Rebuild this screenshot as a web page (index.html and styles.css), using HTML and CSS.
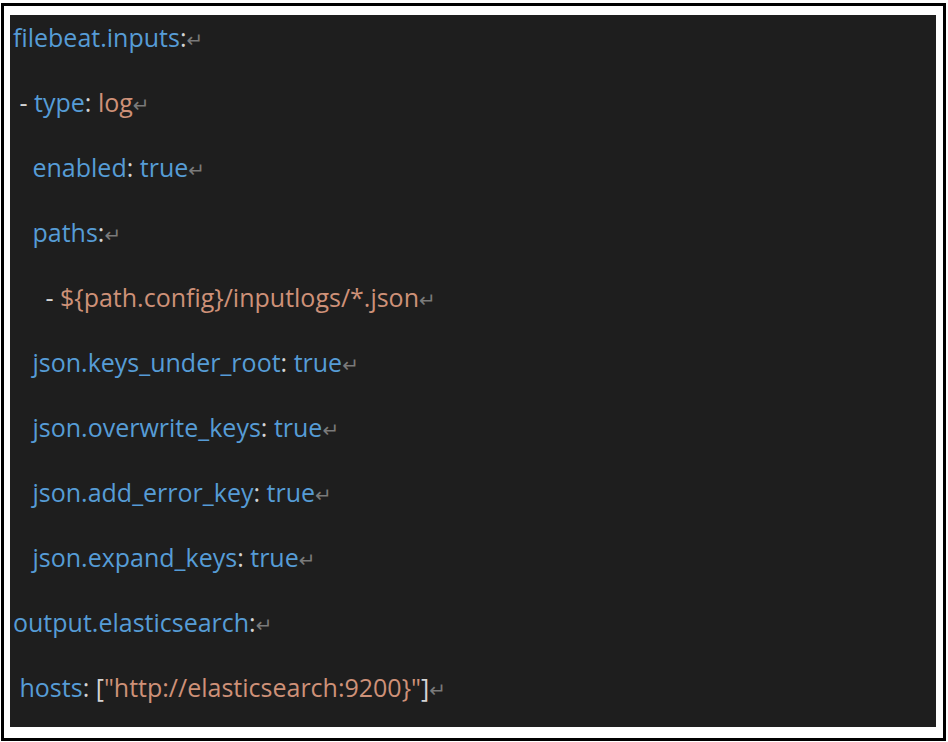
FILE: index.html
```html
<!DOCTYPE html>
<html>
<head>
<meta charset="utf-8">
<link rel="stylesheet" href="styles.css">
</head>
<body>
<div class="frame">
  <div class="code">
    <p class="ln"><span class="k">filebeat.inputs</span><span class="p">:</span><span class="r">↵</span></p>
    <p class="ln"><span class="p">&nbsp;- </span><span class="k">type</span><span class="p">: </span><span class="s">log</span><span class="r">↵</span></p>
    <p class="ln"><span class="p">&nbsp;&nbsp;&nbsp;</span><span class="k">enabled</span><span class="p">: </span><span class="k">true</span><span class="r">↵</span></p>
    <p class="ln"><span class="p">&nbsp;&nbsp;&nbsp;</span><span class="k">paths</span><span class="p">:</span><span class="r">↵</span></p>
    <p class="ln"><span class="p">&nbsp;&nbsp;&nbsp;&nbsp;&nbsp;- </span><span class="s">${path.config}/inputlogs/*.json</span><span class="r">↵</span></p>
    <p class="ln"><span class="p">&nbsp;&nbsp;&nbsp;</span><span class="k">json.keys_under_root</span><span class="p">: </span><span class="k">true</span><span class="r">↵</span></p>
    <p class="ln"><span class="p">&nbsp;&nbsp;&nbsp;</span><span class="k">json.overwrite_keys</span><span class="p">: </span><span class="k">true</span><span class="r">↵</span></p>
    <p class="ln"><span class="p">&nbsp;&nbsp;&nbsp;</span><span class="k">json.add_error_key</span><span class="p">: </span><span class="k">true</span><span class="r">↵</span></p>
    <p class="ln"><span class="p">&nbsp;&nbsp;&nbsp;</span><span class="k">json.expand_keys</span><span class="p">: </span><span class="k">true</span><span class="r">↵</span></p>
    <p class="ln"><span class="k">output.elasticsearch</span><span class="p">:</span><span class="r">↵</span></p>
    <p class="ln"><span class="p">&nbsp;</span><span class="k">hosts</span><span class="p">: [</span><span class="s">"http://elasticsearch:9200}"</span><span class="p">]</span><span class="r">↵</span></p>
  </div>
</div>
</body>
</html>
```
FILE: styles.css
```css
html, body {
  margin: 0;
  padding: 0;
  background: #ffffff;
}
.frame {
  box-sizing: border-box;
  width: 945px;
  height: 738px;
  margin: 3px 0 0 1px;
  border: 3px solid #000000;
  padding: 9px 7px 10px 6px;
}
.code {
  box-sizing: border-box;
  height: 712px;
  background: #1e1e1e;
  padding: 6px 0 0 3px;
  display: flex;
  flex-direction: column;
  gap: 33px;
  font-family: "Open Sans", "Noto Sans CJK SC", sans-serif;
  font-size: 25px;
  white-space: nowrap;
}
.ln {
  margin: 0;
  height: 32px;
  line-height: 32px;
}
.k { color: #569cd6; }
.p { color: #d4d4d4; }
.s { color: #ce9178; }
.r {
  color: #7a7a7a;
  font-family: "DejaVu Sans", sans-serif;
  font-size: 20px;
}
```
